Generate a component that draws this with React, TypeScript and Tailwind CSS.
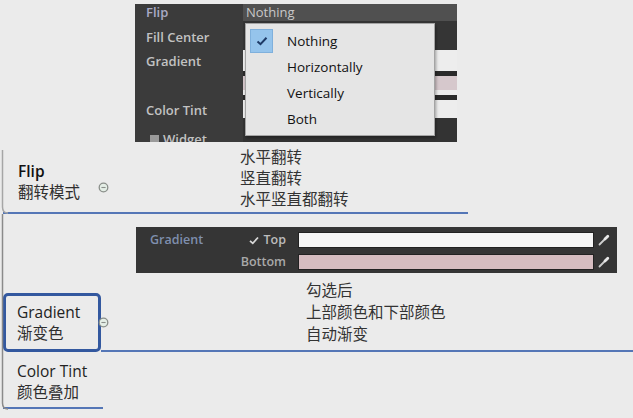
import React from 'react'

const cjk = "font-['Open_Sans','Noto_Sans_CJK_SC',sans-serif]"

const Collapse = () => (
  <svg width="11" height="11" viewBox="0 0 11 11" className="block">
    <circle cx="5.5" cy="5.5" r="4.3" fill="#e4eee6" stroke="#8a8f8a" strokeWidth="1.3" />
    <line x1="3.4" y1="5.5" x2="7.6" y2="5.5" stroke="#8a8f8a" strokeWidth="1.1" />
  </svg>
)

const Pipette = () => (
  <svg width="12" height="12" viewBox="0 0 12 12" className="block">
    <line x1="1.5" y1="10.5" x2="7" y2="5" stroke="#cfcfcf" strokeWidth="1.8" strokeLinecap="round" />
    <line x1="7" y1="5" x2="9.8" y2="2.2" stroke="#e8e8e8" strokeWidth="2.8" strokeLinecap="round" />
  </svg>
)

const menuItems = ['Nothing', 'Horizontally', 'Vertically', 'Both']

const InspectorPanel = () => (
  <div className="relative ml-[135px] mt-[4px] flex h-[138px] w-[322px] overflow-hidden bg-[#3b3b3b] text-[13px] font-semibold text-[#c2c2c2]">
    <div className="flex w-[108px] flex-col pl-[11px]">
      <div className="flex h-[17px] items-center text-[#a9aac4]">Flip</div>
      <div className="mt-[8px] leading-[17px]">Fill Center</div>
      <div className="mt-[7px] leading-[17px]">Gradient</div>
      <div className="mt-[32px] leading-[17px]">Color Tint</div>
      <div className="mt-[12px] flex items-center gap-[4px] pl-[4px] leading-[17px]">
        <span className="inline-block h-[9px] w-[9px] bg-[#9a9a9a]" />
        <span>Widget</span>
      </div>
    </div>
    <div className="flex w-[214px] flex-col">
      <div className="flex h-[17px] items-center bg-[#505050] pl-[3px] font-normal text-[#c8c8c8]">Nothing</div>
      <div className="h-[29px] bg-[#353535]" />
      <div className="h-[21px] bg-[#ededed]" />
      <div className="h-[5px] bg-[#2a2a2a]" />
      <div className="h-[14px] bg-[#d6c8cc]" />
      <div className="h-[5px] bg-[#ededed]" />
      <div className="h-[5px] bg-[#2a2a2a]" />
      <div className="h-[18px] bg-[#ededed]" />
      <div className="flex-1 bg-[#333333]" />
    </div>

    <div className="absolute left-[110px] top-[19px] h-[113px] w-[190px] border border-[#a4a4a4] bg-[#e5e5e5] font-normal text-[#111] shadow-[1px_2px_3px_rgba(0,0,0,0.35)]">
      <div className="flex flex-col pt-[4px]">
        {menuItems.map((item, i) => (
          <div key={item} className="flex h-[26px] items-center">
            <div className="w-[41px] pl-[4px]">
              {i === 0 ? (
                <div className="flex h-[24px] w-[23px] items-center justify-center border border-[#7fb0dc] bg-[#95c4ec]">
                  <svg width="12" height="10" viewBox="0 0 12 10">
                    <path d="M1.5 5.5 L4.5 8.2 L10.5 1.8" fill="none" stroke="#1e3a66" strokeWidth="2" />
                  </svg>
                </div>
              ) : null}
            </div>
            <span className="text-[13.5px] font-medium">{item}</span>
          </div>
        ))}
      </div>
    </div>
  </div>
)

const GradientPanel = () => (
  <div className="ml-[136px] mt-[13px] flex h-[46px] w-[481px] flex-col gap-[6px] bg-[#353535] pt-[5px] text-[12.5px] font-semibold">
    <div className="flex h-[16px] items-center">
      <div className="flex w-[151px] items-center justify-between pl-[14px] pr-[1px]">
        <span className="text-[#7f8fae]">Gradient</span>
        <span className="flex items-center gap-[5px] text-[#bdbdbd]">
          <svg width="10" height="9" viewBox="0 0 10 9">
            <path d="M1 4.8 L3.8 7.3 L9 1.5" fill="none" stroke="#d8d8d8" strokeWidth="1.8" />
          </svg>
          Top
        </span>
      </div>
      <div className="ml-[11px] h-[16px] w-[296px] border border-[#222] bg-[#f5f5f5]" />
      <div className="ml-[4px]"><Pipette /></div>
    </div>
    <div className="flex h-[16px] items-center">
      <div className="flex w-[151px] justify-end pr-[1px] text-[#a9a9a9]">Bottom</div>
      <div className="ml-[11px] h-[16px] w-[296px] border border-[#222] bg-[#d5bcc0]" />
      <div className="ml-[4px]"><Pipette /></div>
    </div>
  </div>
)

export default function App() {
  return (
    <div className={`relative h-[418px] w-[633px] overflow-hidden bg-[#ebebeb] ${cjk}`}>
      <svg className="pointer-events-none absolute left-0 top-0" width="633" height="418">
        <path d="M2.5 150 L2.5 207 Q2.5 213 8 213" fill="none" stroke="#a6a6a6" strokeWidth="1.5" />
        <path d="M2.5 214 L2.5 403 Q2.5 409 8 409" fill="none" stroke="#8a8a8a" strokeWidth="1.5" />
      </svg>

      <InspectorPanel />

      <div className="ml-[3px] flex h-[72px] w-[465px] items-start border-b-2 border-[#5476b6]">
        <div className="flex w-[95px] flex-col pl-[15px] pt-[19px] text-[15.5px] leading-[21px]">
          <span className="font-semibold text-[#111]">Flip</span>
          <span className="text-[#2e2e2e]">翻转模式</span>
        </div>
        <div className="mt-[40px]"><Collapse /></div>
        <div className="ml-[131px] flex flex-col pt-[5px] text-[15.5px] leading-[21px] text-[#333]">
          <span>水平翻转</span>
          <span>竖直翻转</span>
          <span>水平竖直都翻转</span>
        </div>
      </div>

      <GradientPanel />

      <div className="ml-[3px] mt-[6px] flex items-end">
        <div className="flex h-[59px] w-[98px] flex-col justify-center rounded-[5px] border-[3px] border-[#33589f] pl-[11px] text-[15.5px] leading-[21px] text-[#222]">
          <span>Gradient</span>
          <span className="text-[#2e2e2e]">渐变色</span>
        </div>
        <div className="flex h-[73px] flex-1 items-start border-b-2 border-[#5476b6]">
          <div className="-ml-[3px] mt-[38px]"><Collapse /></div>
          <div className="ml-[197px] flex flex-col text-[15.5px] leading-[22px] text-[#333]">
            <span>勾选后</span>
            <span>上部颜色和下部颜色</span>
            <span>自动渐变</span>
          </div>
        </div>
      </div>

      <div className="ml-[3px] flex w-[100px] flex-col border-b-2 border-[#5476b6] pb-[4px] pl-[14px] pt-[9px] text-[15.5px] leading-[21px]">
        <span className="text-[#222]">Color Tint</span>
        <span className="text-[#2e2e2e]">颜色叠加</span>
      </div>
    </div>
  )
}
